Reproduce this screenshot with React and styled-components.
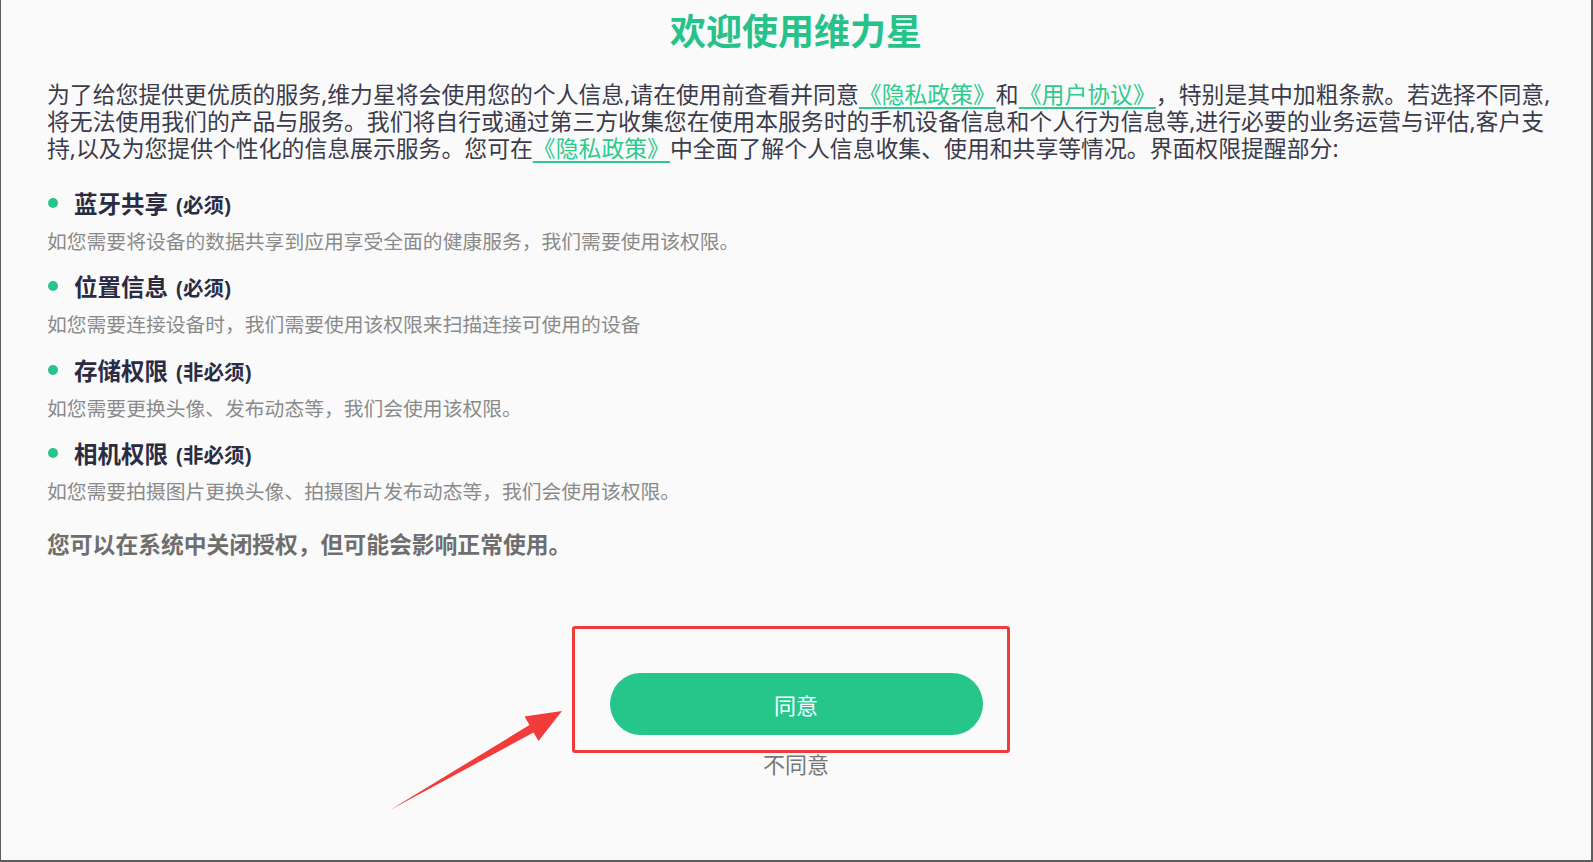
import React from "react";
import styled, { createGlobalStyle } from "styled-components";

const permissions = [
  { name: "蓝牙共享", tag: "(必须)", desc: "如您需要将设备的数据共享到应用享受全面的健康服务，我们需要使用该权限。" },
  { name: "位置信息", tag: "(必须)", desc: "如您需要连接设备时，我们需要使用该权限来扫描连接可使用的设备" },
  { name: "存储权限", tag: "(非必须)", desc: "如您需要更换头像、发布动态等，我们会使用该权限。" },
  { name: "相机权限", tag: "(非必须)", desc: "如您需要拍摄图片更换头像、拍摄图片发布动态等，我们会使用该权限。" },
];

export const App = () => {
  return (
    <>
      <GlobalStyle />
      <Page>
        <Title>欢迎使用维力星</Title>
        <Intro>
          为了给您提供更优质的服务,维力星将会使用您的个人信息,请在使用前查看并同意
          <Link>《隐私政策》</Link>和<Link>《用户协议》</Link>
          ，特别是其中加粗条款。若选择不同意,将无法使用我们的产品与服务。我们将自行或通过第三方收集您在使用本服务时的手机设备信息和个人行为信息等,进行必要的业务运营与评估,客户支持,以及为您提供个性化的信息展示服务。您可在
          <Link>《隐私政策》</Link>中全面了解个人信息收集、使用和共享等情况。界面权限提醒部分:
        </Intro>
        <PermissionList>
          {permissions.map((p, i) => (
            <PermissionItem key={i}>
              <PermissionHead>
                <Dot />
                <PermissionName>{p.name}</PermissionName>
                <PermissionTag>{p.tag}</PermissionTag>
              </PermissionHead>
              <PermissionDesc>{p.desc}</PermissionDesc>
            </PermissionItem>
          ))}
        </PermissionList>
        <Note>您可以在系统中关闭授权，但可能会影响正常使用。</Note>
        <Actions>
          <AgreeButton>同意</AgreeButton>
          <DisagreeText>不同意</DisagreeText>
        </Actions>

        {/* red annotation drawn over the screenshot */}
        <HighlightBox />
        <ArrowLayer width="1593" height="862" viewBox="0 0 1593 862">
          <polygon
            points="389,810 532.5,732.5 537.5,741 561,711 523.5,716.5 528.5,725"
            fill="#f23b3b"
          />
        </ArrowLayer>
      </Page>
    </>
  );
};

export default App;

const GlobalStyle = createGlobalStyle`
  html, body {
    margin: 0;
    padding: 0;
    background: #fafafa;
  }
  * {
    box-sizing: border-box;
  }
`;

const Page = styled.div`
  position: relative;
  width: 1593px;
  height: 862px;
  overflow: hidden;
  background: #fafafa;
  border-left: 1px solid #5c5c5c;
  border-right: 2px solid #5c5c5c;
  border-bottom: 2px solid #5c5c5c;
  padding: 10px 46px 0 46px;
  font-family: "Noto Sans", "Noto Sans CJK SC", sans-serif;
  display: flex;
  flex-direction: column;
`;

const Title = styled.h1`
  margin: 0;
  text-align: center;
  font-size: 36px;
  line-height: 44px;
  font-weight: 700;
  color: #27c28a;
`;

const Intro = styled.p`
  margin: 27px -8px 0 0;
  font-size: 22.85px;
  line-height: 27px;
  color: #3b3b4b;
  text-spacing-trim: space-all;
`;

const Link = styled.span`
  color: #2ccb8d;
  text-decoration: underline;
  text-decoration-color: #2ccb8d;
  text-underline-offset: 4px;
`;

const PermissionList = styled.div`
  margin-top: 26px;
  display: flex;
  flex-direction: column;
  gap: 15.3px;
`;

const PermissionItem = styled.div`
  display: flex;
  flex-direction: column;
`;

const PermissionHead = styled.div`
  height: 32px;
  display: flex;
  flex-direction: row;
  align-items: baseline;
`;

const Dot = styled.span`
  width: 10px;
  height: 10px;
  border-radius: 50%;
  background: #27c58a;
  margin: 0 16px 0 1px;
  align-self: center;
  transform: translateY(-1px);
`;

const PermissionName = styled.span`
  font-size: 23.5px;
  line-height: 32px;
  font-weight: 700;
  color: #2a2c44;
  margin-right: 8px;
`;

const PermissionTag = styled.span`
  font-size: 20.5px;
  line-height: 32px;
  font-weight: 700;
  color: #2a2c44;
`;

const PermissionDesc = styled.div`
  margin-top: 8px;
  font-size: 19.8px;
  line-height: 28px;
  color: #8a8a8a;
`;

const Note = styled.div`
  margin-top: 24.5px;
  font-size: 22.8px;
  line-height: 30px;
  font-weight: 700;
  color: #6e6e6e;
`;

const Actions = styled.div`
  margin-top: 113px;
  display: flex;
  flex-direction: column;
  align-items: center;
`;

const AgreeButton = styled.div`
  width: 373px;
  height: 62px;
  border-radius: 31px;
  background: #26c68b;
  color: #ffffff;
  font-size: 22px;
  display: flex;
  align-items: center;
  justify-content: center;
`;

const DisagreeText = styled.div`
  margin-top: 14.5px;
  font-size: 22px;
  line-height: 28px;
  color: #777777;
`;

const HighlightBox = styled.div`
  position: absolute;
  left: 571px;
  top: 626px;
  width: 438px;
  height: 127px;
  border: 3px solid #f03b3b;
  border-radius: 3px;
  pointer-events: none;
`;

const ArrowLayer = styled.svg`
  position: absolute;
  left: 0;
  top: 0;
  pointer-events: none;
`;
